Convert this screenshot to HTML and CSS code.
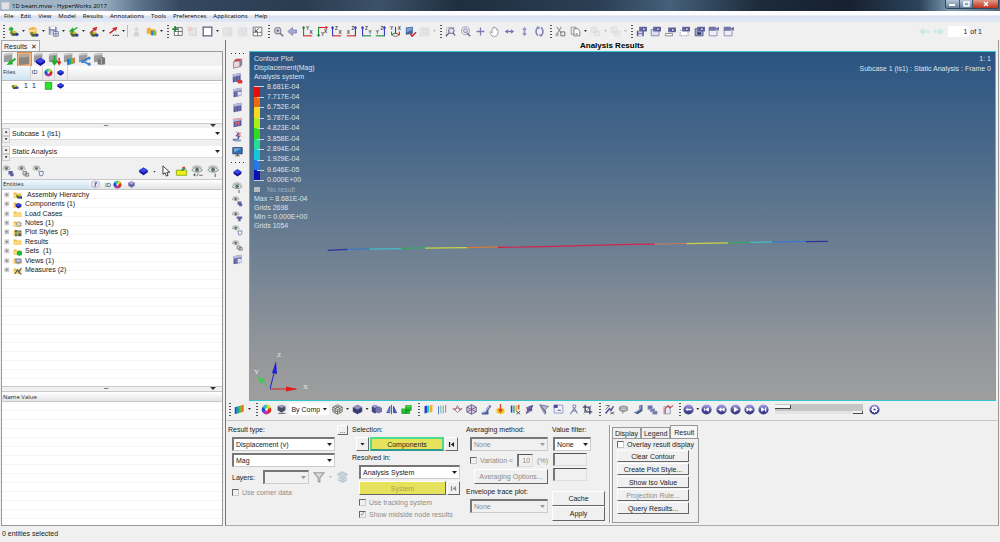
FILE: index.html
```html
<!DOCTYPE html>
<html lang="en">
<head>
<meta charset="utf-8">
<title>1D beam.mvw - HyperWorks 2017</title>
<link rel="stylesheet" href="styles.css">
</head>
<body>
<svg class="defs" aria-hidden="true">
  <defs>
    <linearGradient id="ball" x1="0" y1="0" x2="0" y2="1"><stop offset="0" stop-color="#a9a9ea"/><stop offset=".6" stop-color="#4a4a9c"/><stop offset="1" stop-color="#35357c"/></linearGradient>
    <linearGradient id="rain" x1="0" x2="1"><stop offset="0" stop-color="#1428c8"/><stop offset=".3" stop-color="#18b8d8"/><stop offset=".55" stop-color="#3cc83c"/><stop offset=".75" stop-color="#e8d820"/><stop offset="1" stop-color="#d82010"/></linearGradient>
    <symbol id="cubes" viewBox="0 0 14 14"><ellipse cx="5" cy="8.500" rx="2.600" ry="2.200" fill="#7d8a35"/><ellipse cx="8.500" cy="8" rx="2.500" ry="2" fill="#d8c022"/><ellipse cx="7" cy="10.800" rx="2.800" ry="2" fill="#55603a"/><ellipse cx="11" cy="10.600" rx="2.500" ry="2" fill="#2b3fa8"/></symbol>
    <symbol id="folder" viewBox="0 0 14 14"><path d="M1 4h4l1 1.500h7V12H1z" fill="#f0b93c"/><path d="M2 6.500h11V12H1z" fill="#fbdc7c"/></symbol>
    <symbol id="new" viewBox="0 0 14 14"><use href="#cubes"/><path d="M4 1v6M1 4h6M2 2l4 4M6 2L2 6" stroke="#2fae3a" stroke-width="1.400"/></symbol>
    <symbol id="open" viewBox="0 0 14 14"><path d="M1 3l6-2 4 2v5H1z" fill="#f3b54a"/><path d="M2 5l9-1-1 4H1z" fill="#ffd98a"/><use href="#cubes" y="1"/></symbol>
    <symbol id="save" viewBox="0 0 14 14"><path d="M1 1h10v10H1z" fill="#8286b0"/><path d="M3 1h6v3H3z" fill="#fff"/><path d="M3 6h6v5H3z" fill="#d4d6ea"/><path d="M7 7h6v6H7z" fill="#eef" stroke="#6a6f92"/><path d="M10 7v6M7 10h6" stroke="#6a6f92"/></symbol>
    <symbol id="imp" viewBox="0 0 14 14"><use href="#cubes" y="1"/><path d="M12 1L7 4 6 2 1 7l7 1-1-2 5-3z" fill="#22a52c"/></symbol>
    <symbol id="exp" viewBox="0 0 14 14"><use href="#cubes" y="1"/><path d="M2 8l5-4-2-1 7-2-2 6-1-2-5 4z" fill="#c92a36"/></symbol>
    <symbol id="expd" viewBox="0 0 14 14"><path d="M1 9l6-5-2-1 7-2-2 6-1-2-6 5z" fill="#c92a36"/><path d="M6 12h2m1 0h2m1 0h2" stroke="#444" stroke-width="1.500"/></symbol>
    <symbol id="user" viewBox="0 0 14 14"><circle cx="7" cy="4" r="2.500" fill="#d3ddd5"/><path d="M3 13l2-6h4l2 6z" fill="#ccd6cf"/></symbol>
    <symbol id="folders" viewBox="0 0 14 14"><path d="M1 3l5-1v8H1zM5 4h7v7H5z" fill="#f4ab38"/><path d="M7 6h6v6H7z" fill="url(#rain)"/></symbol>
    <symbol id="padd" viewBox="0 0 14 14"><path d="M3 2h10v10H3zM8 2v10M3 7h10" fill="#fff" stroke="#55585e"/><path d="M4 0v7M0.500 4h7" stroke="#1f8c32" stroke-width="2"/></symbol>
    <symbol id="pdel" viewBox="0 0 14 14"><path d="M3 3h9v9H3z" fill="#e8e4e6" stroke="#d9d2d6"/><path d="M1 1l5 5M6 1L1 6" stroke="#efc5c8" stroke-width="1.500"/></symbol>
    <symbol id="box" viewBox="0 0 14 14"><path d="M1.500 1.500h11v11h-11z" fill="#fff" stroke="#5b5f80" stroke-width="1.600"/></symbol>
    <symbol id="fade" viewBox="0 0 14 14"><path d="M1.500 2.500h11v10h-11zM6 4h5v6H6z" fill="#e4e5e8" stroke="#d9dbde"/></symbol>
    <symbol id="swap" viewBox="0 0 14 14"><path d="M1.500 1.500h11v11h-11zM7 8v4.500M1.500 8h11" fill="#fff" stroke="#555968"/><path d="M4 7l5-4M4 3v4h3" fill="none" stroke="#30343e"/></symbol>
    <symbol id="zin" viewBox="0 0 14 14"><circle cx="6" cy="6" r="4" fill="#d6d6dd" stroke="#84858e" stroke-width="1.400"/><path d="M4 6h4M6 4v4" stroke="#555a90"/><path d="M9 9l4 4" stroke="#777986" stroke-width="2"/></symbol>
    <symbol id="back" viewBox="0 0 14 14"><path d="M1 7l6-5v3h5v4H7v3z" fill="#a7a9dc" stroke="#7c7fae"/></symbol>
    <symbol id="v1" viewBox="0 0 14 14"><path d="M2 13V1M.5 3L2 1l1.500 2" stroke="#159038" fill="none" stroke-width="1.400"/><path d="M2 12.500h11" stroke="#cc2b2b" stroke-width="1.400"/><text x="5" y="5">Y</text><text x="9.500" y="10">X</text></symbol>
    <symbol id="v2" viewBox="0 0 14 14"><path d="M2 1v12M.5 11L2 13l1.500-2" stroke="#159038" fill="none" stroke-width="1.400"/><path d="M2 2h11M11 .5L13 2l-2 1.500" stroke="#cc2b2b" fill="none" stroke-width="1.400"/><text x="9" y="9">X</text><text x="5" y="13">Y</text></symbol>
    <symbol id="v3" viewBox="0 0 14 14"><path d="M2 13V1M.5 3L2 1l1.500 2" stroke="#3438c4" fill="none" stroke-width="1.400"/><path d="M2 12.500h11" stroke="#cc2b2b" stroke-width="1.400"/><text x="5" y="5">Z</text><text x="9.500" y="10">X</text></symbol>
    <symbol id="v4" viewBox="0 0 14 14"><path d="M12 13V1m-1.500 2L12 1l1.500 2" stroke="#3438c4" fill="none" stroke-width="1.400"/><path d="M1 12.500h11" stroke="#cc2b2b" stroke-width="1.400"/><text x="7" y="5">Z</text><text x="1" y="10">X</text></symbol>
    <symbol id="v5" viewBox="0 0 14 14"><path d="M2 13V1M.5 3L2 1l1.500 2" stroke="#3438c4" fill="none" stroke-width="1.400"/><path d="M2 12.500h11" stroke="#159038" stroke-width="1.400"/><text x="5" y="5">Z</text><text x="9.500" y="10">Y</text></symbol>
    <symbol id="v6" viewBox="0 0 14 14"><path d="M12 13V1m-1.500 2L12 1l1.500 2" stroke="#3438c4" fill="none" stroke-width="1.400"/><path d="M1 12.500h11" stroke="#159038" stroke-width="1.400"/><text x="7" y="5">Z</text><text x="1" y="10">Y</text></symbol>
    <symbol id="iso" viewBox="0 0 14 14"><path d="M7 9V1" stroke="#3438c4" stroke-width="1.400"/><path d="M7 9l-5 2V7" stroke="#159038" fill="none" stroke-width="1.300"/><path d="M7 9l5 2V7" stroke="#cc2b2b" fill="none" stroke-width="1.300"/><path d="M3 12l4 1.500 4-1.500" stroke="#555" fill="none"/><text x="0" y="5">Y</text><text x="10" y="5">X</text></symbol>
    <symbol id="rview" viewBox="0 0 14 14"><path d="M1 2l9-1v9l-9 1z" fill="#42679f"/><path d="M2 3l7-1v3l-7 3z" fill="#7ea0cf"/><path d="M7 10l2 3 5-5" fill="none" stroke="#d3242e" stroke-width="2"/></symbol>
    <symbol id="zrect" viewBox="0 0 14 14"><path d="M2 12V2h10" fill="none" stroke="#8d8fb0" stroke-dasharray="2 1"/><circle cx="8" cy="6" r="3.500" fill="#e0e1ea" stroke="#777a94" stroke-width="1.300"/><path d="M5 9l-4 4M10 9l3 3" stroke="#555978" stroke-width="1.500"/></symbol>
    <symbol id="zfit" viewBox="0 0 14 14"><circle cx="7" cy="6" r="5" fill="none" stroke="#a4a5c4" stroke-width="1.300"/><circle cx="7" cy="6" r="2.500" fill="#dedfea" stroke="#777a94"/><path d="M9 9l4 4" stroke="#6c6e90" stroke-width="1.800"/></symbol>
    <symbol id="cross" viewBox="0 0 14 14"><path d="M7 2v10M2 7h10" stroke="#777bb8" stroke-width="1.600"/></symbol>
    <symbol id="hand" viewBox="0 0 14 14"><path d="M4 13L1 8l1-1 2 2V3l1-1 1 1V1.500h1.500V3l1-1 1 1v2l1-1 1 1v4l-2 4z" fill="#fff" stroke="#777985" stroke-width=".8"/></symbol>
    <symbol id="lr" viewBox="0 0 14 14"><path d="M1 7l4-3v2h4V4l4 3-4 3V8H5v2z" fill="#7477ba"/></symbol>
    <symbol id="ud" viewBox="0 0 14 14"><path d="M7 1l3 4H8v4h2l-3 4-3-4h2V5H4z" fill="#9092c4"/></symbol>
    <symbol id="rot" viewBox="0 0 14 14"><path d="M5 1.500Q0 7 5 12.500M9 1.500q5 5.500 0 11" fill="none" stroke="#8083ba" stroke-width="2"/><path d="M3 1h4v3zM11 13H7v-3z" fill="#7376b5"/></symbol>
    <symbol id="cut" viewBox="0 0 14 14"><path d="M2 1l7 9M8 1L3 10" stroke="#8a8ca0" stroke-width="1.300"/><circle cx="2.500" cy="11" r="1.500" fill="none" stroke="#777"/><path d="M7.500 7.500h5v5h-5z" fill="#eee" stroke="#555"/></symbol>
    <symbol id="copy" viewBox="0 0 14 14"><path d="M1.500 1.500h6v9h-6z" fill="#eee" stroke="#888"/><path d="M5 3.500h5l2.500 2.500v6.500H5z" fill="#fff" stroke="#666"/><path d="M7 9h3v3H7z" fill="#aaa"/></symbol>
    <symbol id="paste" viewBox="0 0 14 14"><path d="M1.500 1.500h7v7h-7zM5.500 6.500h7v6h-7z" fill="#e8e8e8" stroke="#dadada"/></symbol>
    <symbol id="cam" viewBox="0 0 14 14"><path d="M4 1h10v6H4z" fill="#6467a4"/><circle cx="10" cy="4" r="2" fill="#c9cbe6" stroke="#353872"/></symbol>
    <symbol id="c1" viewBox="0 0 14 14"><path d="M1 6h9v7H1z" fill="#5b5f9c"/><path d="M3 6h5v3H3zM3 10h5v3H3z" fill="#d5d7ec"/><use href="#cam"/></symbol>
    <symbol id="c2" viewBox="0 0 14 14"><path d="M1.500 4.500h10v8h-10z" fill="#dddff0" stroke="#7376a3"/><use href="#cam"/></symbol>
    <symbol id="c3" viewBox="0 0 14 14"><path d="M.5 9.500h9v3h-9z" fill="#fff" stroke="#777"/><use href="#cam" y="1"/></symbol>
    <symbol id="c4" viewBox="0 0 14 14"><path d="M1.500 5.500h10v7h-10z" fill="#fff" stroke="#8b8eaa" stroke-dasharray="2 1"/><use href="#cam"/></symbol>
    <symbol id="c5" viewBox="0 0 14 14"><path d="M1.500 3.500h10v9h-10z" fill="#a5a8ca" stroke="#454979"/><path d="M4 8h5v3H4z" fill="#333a6c"/><use href="#cam"/></symbol>
    <symbol id="c6" viewBox="0 0 14 14"><path d="M1.500 3.500h10v9h-10z" fill="#eeeef6" stroke="#777aa3"/><path d="M1 1h9v5H1zM10 3l4-2v5l-4-2z" fill="#7275a5"/></symbol>
    <symbol id="nav" viewBox="0 0 14 14"><path d="M0 7l6-5v3h3v4H6v3zM10 5h3v4h-3z" fill="#c9ebe8"/></symbol>
    <symbol id="win" viewBox="0 0 14 14"><path d="M2 3l10-2v10L2 13z" fill="#565a98"/><path d="M2 3l10-2v3L2 6z" fill="#b9bcdf"/><path d="M5 5v7M9 4v7" stroke="#8a8dc2"/></symbol>
    <symbol id="w1" viewBox="0 0 14 14"><path d="M2 5l8-2v8l-8 2z" fill="#e6dde2" stroke="#966b78"/><path d="M2 4l3-3h8l-3 3z" fill="#c44c55"/><path d="M10 4l3-3v8l-3 3z" fill="#8b7c9c"/></symbol>
    <symbol id="w2" viewBox="0 0 14 14"><use href="#win" x="-1" y="-1"/><ellipse cx="10" cy="11" rx="3.500" ry="2.500" fill="#d9303a"/></symbol>
    <symbol id="w3" viewBox="0 0 14 14"><use href="#win"/><path d="M7 6h5v5H7z" fill="#dfe0ef"/></symbol>
    <symbol id="w4" viewBox="0 0 14 14"><use href="#win"/><path d="M1 2h12v2H1z" fill="#e3a9a9"/><path d="M4 6h5v4H4z" fill="#c95c6c"/></symbol>
    <symbol id="probe" viewBox="0 0 14 14"><path d="M1 11h6l2-4-3-1 3-4" fill="none" stroke="#54689c" stroke-width="2"/><path d="M5 1l7 6M12 2L6 7" stroke="#d15a5a"/><ellipse cx="7" cy="12" rx="5" ry="1.500" fill="#8da0c4"/></symbol>
    <symbol id="screen" viewBox="0 0 14 14"><path d="M1 2h12v8H1z" fill="#326fb8" stroke="#273c60"/><path d="M2 3h10l-9 5z" fill="#6aaee2"/><path d="M6 10h2v2H6zM4 12h6v1H4z" fill="#555"/></symbol>
    <symbol id="comp" viewBox="0 0 14 14"><path d="M2 6l5-3 5 3v2.500L7 12 2 8.500z" fill="#1414a0"/><path d="M2 6l5-3 5 3-5 3z" fill="#3a46e0"/></symbol>
    <symbol id="eye" viewBox="0 0 14 14"><path d="M0 6q6-7 13 0-6 5-13 0z" fill="#e4e7e6" stroke="#818a88"/><circle cx="6.500" cy="5.500" r="2.300" fill="#5a706c"/><path d="M1 3q5-4 11 0" fill="none" stroke="#999"/></symbol>
    <symbol id="eye1" viewBox="0 0 14 14"><use href="#eye"/><path d="M9 10v4" stroke="#444"/></symbol>
    <symbol id="eyepm" viewBox="0 0 14 14"><use href="#eye"/><path d="M2 11.500h3M3.500 10v3M6 13l2-3M9 12h4" stroke="#555"/></symbol>
    <symbol id="eyec" viewBox="0 0 14 14"><use href="#eye" width="10" height="10"/><path d="M7 7h5v4H7zM9 10h4v3H9z" fill="#5d609c"/></symbol>
    <symbol id="eyet" viewBox="0 0 14 14"><use href="#eye" width="10" height="10"/><path d="M6 7h7v3h-2v3H8v-3H6z" fill="#5d609c"/></symbol>
    <symbol id="eyeo" viewBox="0 0 14 14"><use href="#eye" width="10" height="10"/><path d="M7.500 7.500h5v3l-1 2h-3z" fill="#f2f2fa" stroke="#6d70a3"/></symbol>
    <symbol id="eyer" viewBox="0 0 14 14"><use href="#eye" width="10" height="10"/><path d="M6.500 7.500h4v4h-4zM9 9.500h4v3.500H9z" fill="#ddd" stroke="#777"/></symbol>
    <symbol id="contour" viewBox="0 0 14 14"><path d="M1 4l11-3v9L1 13z" fill="url(#rain)"/><path d="M5 3v9M9 2v9" stroke="#2a4c50" stroke-width=".6"/></symbol>
    <symbol id="wheel" viewBox="0 0 14 14"><circle cx="7" cy="7" r="6" fill="#3ab83c"/><path d="M7 7V1a6 6 0 0 1 5.500 4z" fill="#f0d322"/><path d="M7 7l5.500-2a6 6 0 0 1-3 7.500z" fill="#e22a2a"/><path d="M7 7l2.500 5.500A6 6 0 0 1 2 10.500z" fill="#c02cc0"/><path d="M7 7l-5 3.500A6 6 0 0 1 2 4z" fill="#2242d8"/><path d="M7 7L2 4a6 6 0 0 1 5-3z" fill="#25c5cb"/><circle cx="7" cy="7" r="1.600" fill="#fff"/></symbol>
    <symbol id="gcube" viewBox="0 0 14 14"><path d="M2 3l5-2 5 2v5l-5 3-5-3z" fill="#4b4f66"/><path d="M2 3l5-2 5 2-5 2z" fill="#9da0b8"/><path d="M3 12h9" stroke="#777" stroke-width="1.500"/></symbol>
    <symbol id="mesh" viewBox="0 0 14 14"><path d="M1 4l6-3 6 3v6l-6 3-6-3zM1 4l6 3 6-3M7 7v6M4 2.500l6 3v6M10 2.500l-6 3v6M1 7l6 3 6-3" fill="#e5e5e0" stroke="#55554e" stroke-width=".9"/></symbol>
    <symbol id="solid" viewBox="0 0 14 14"><path d="M1 4l6-3 6 3v6l-6 3-6-3z" fill="#484b86"/><path d="M1 4l6-3 6 3-6 3z" fill="#9194bf"/><path d="M7 7v6M4 5.500v6M10 5.500v6M1 7l6 3 6-3" stroke="#252850" stroke-width=".7" fill="none"/></symbol>
    <symbol id="blocks" viewBox="0 0 14 14"><path d="M1 3l4-2 4 2v7l-4 2-4-2z" fill="#454981"/><path d="M6 5l4-2 4 2v5l-4 2-4-2z" fill="#7276ac"/><path d="M1 3l4-2 4 2-4 2z" fill="#9da0c8"/></symbol>
    <symbol id="mirror" viewBox="0 0 14 14"><path d="M1 11l4-8v8z" fill="#7f9bea" stroke="#2b3d9c"/><path d="M7 1v12" stroke="#444"/><path d="M9.500 3v8h4z" fill="#4b62cc" stroke="#2b3d9c"/></symbol>
    <symbol id="gblocks" viewBox="0 0 14 14"><path d="M1 6h6v6H1zM6 2h7v6H6zM6 8h5v4H6z" fill="#22c52c" stroke="#168020" stroke-width=".8"/><path d="M1 6h5M7 3h5" stroke="#7cf078"/></symbol>
    <symbol id="bands" viewBox="0 0 14 14"><path d="M2 3l3-1v9l-3 1z" fill="#1c32c4"/><path d="M5 2.500l3-1v9l-3 1z" fill="#28c4d8"/><path d="M9 2l3-1v9l-3 1z" fill="#e8b424"/></symbol>
    <symbol id="lines" viewBox="0 0 14 14"><path d="M2 3v10" stroke="#2b51c8"/><path d="M5 2v10" stroke="#25a7a7"/><path d="M8 2v10" stroke="#51a83a"/><path d="M11 1v10" stroke="#c94a33"/></symbol>
    <symbol id="vec" viewBox="0 0 14 14"><path d="M1 5l6 6 6-6M4 8l3-6 3 6M1 7l6-2 6 2" fill="none" stroke="#a35c7a"/></symbol>
    <symbol id="tens" viewBox="0 0 14 14"><path d="M1 4l6-3 6 3v6l-6 3-6-3z" fill="#d0cfe8" stroke="#55467e"/><path d="M7 1v12M1 4l12 6M13 4L1 10" stroke="#80436c"/></symbol>
    <symbol id="bend" viewBox="0 0 14 14"><path d="M1 12h7V7l4-5" fill="none" stroke="#525994" stroke-width="3"/><path d="M1 11l5-2 5-7" fill="none" stroke="#b2c6ec" stroke-width="1.500"/></symbol>
    <symbol id="down" viewBox="0 0 14 14"><path d="M2 6l5-2 5 3v4l-5 2-5-2z" fill="#f5c518"/><path d="M7 0v9M4.500 6.500L7 10l2.500-3.500" fill="none" stroke="#d1481e" stroke-width="1.600"/></symbol>
    <symbol id="fx" viewBox="0 0 14 14"><path d="M1 2h2v9H1z" fill="#2d49ba"/><path d="M4 2h2v9H4z" fill="#45ad8a"/><path d="M7 2h2v7H7z" fill="#ddba34"/><path d="M10 1h2v6h-2z" fill="#b85a40"/><path d="M8 9l5 4m0-4l-5 4" stroke="#333"/></symbol>
    <symbol id="sweep" viewBox="0 0 14 14"><path d="M3 4l9-3-2 5 1 2-9 5 2-5z" fill="#474c9c"/><path d="M2 5h7M2 9h8" stroke="#c99"/></symbol>
    <symbol id="funnel" viewBox="0 0 14 14"><path d="M1 1l11 2-4 4v6L5 9z" fill="#b7bada" stroke="#62668e"/><path d="M3 3l6 8" stroke="#444"/></symbol>
    <symbol id="note" viewBox="0 0 14 14"><path d="M1.500 1.500h11v10h-11z" fill="#f2f2ff" stroke="#8589bb"/><path d="M1 1h5v4H1z" fill="#4549a0"/><path d="M6 8h4" stroke="#334"/></symbol>
    <symbol id="trace" viewBox="0 0 14 14"><circle cx="8" cy="3" r="2" fill="none" stroke="#5d6297"/><path d="M8 5L3 13M8 5l4 7M5 9h6" fill="none" stroke="#7679a5" stroke-width="1.300"/></symbol>
    <symbol id="crop" viewBox="0 0 14 14"><path d="M4 1v9h9M1 4h9v9" fill="none" stroke="#3f4270" stroke-width="1.700"/><path d="M2 12L12 2" stroke="#777"/></symbol>
    <symbol id="meas" viewBox="0 0 14 14"><path d="M2 12L7 6l2 2 3-5" fill="none" stroke="#50558e" stroke-width="2"/><path d="M2 2h5L2 7M8 10l5 3m0-3l-5 3" fill="none" stroke="#555"/></symbol>
    <symbol id="talk" viewBox="0 0 14 14"><ellipse cx="7" cy="6" rx="6" ry="4" fill="#9b9b9b"/><path d="M5 9v4l4-4z" fill="#9b9b9b"/><path d="M4 5h6M4 7h6" stroke="#ddd"/></symbol>
    <symbol id="plane" viewBox="0 0 14 14"><path d="M1 11L8 7V2l4-1v8l-6 4z" fill="#4c5c94"/><path d="M2 11l7-4 1-5" stroke="#b0c0e4" fill="none"/></symbol>
    <symbol id="stack" viewBox="0 0 14 14"><path d="M1 2h6v5H1zM4 6h6v4H4zM7 9h6v4H7z" fill="#6c70a4" stroke="#a9abcf" stroke-width=".6"/></symbol>
    <symbol id="curve" viewBox="0 0 14 14"><path d="M2.500 3.500h8v9h-8z" fill="#e9e9f3" stroke="#8588ad"/><path d="M4 12V6l4-4 2 3 4-3" fill="none" stroke="#c73b42" stroke-width="1.400"/></symbol>
    <symbol id="orb" viewBox="0 0 14 14"><circle cx="7" cy="7" r="6.500" fill="url(#ball)"/></symbol>
    <symbol id="p0" viewBox="0 0 14 14"><use href="#orb"/><path d="M3 7l3-2v1h5v2H6v1z" fill="#fff"/></symbol>
    <symbol id="p1" viewBox="0 0 14 14"><use href="#orb"/><path d="M4 5h1v4H4zM5 7l5-3v6z" fill="#fff"/></symbol>
    <symbol id="p2" viewBox="0 0 14 14"><use href="#orb"/><path d="M2.500 7L7 4v6zM6.500 7L11 4v6z" fill="#fff"/></symbol>
    <symbol id="p3" viewBox="0 0 14 14"><use href="#orb"/><path d="M5 3.500L11 7l-6 3.500z" fill="#fff"/></symbol>
    <symbol id="p4" viewBox="0 0 14 14"><use href="#orb"/><path d="M11.500 7L7 4v6zM7.500 7L3 4v6z" fill="#fff"/></symbol>
    <symbol id="p5" viewBox="0 0 14 14"><use href="#orb"/><path d="M9 4.500h1.500v5H9zM9 7L4 4v6z" fill="#fff"/></symbol>
    <symbol id="p6" viewBox="0 0 14 14"><use href="#orb"/><circle cx="7" cy="7" r="2.600" fill="none" stroke="#fff" stroke-width="1.600"/><path d="M7 2.500v9M2.500 7h9M4 4l6 6M10 4l-6 6" stroke="#fff" stroke-width="1.200"/><circle cx="7" cy="7" r="1.400" fill="#4a4a9c"/></symbol>
    <symbol id="gsq" viewBox="0 0 14 14"><path d="M1 1l9-1v9l-9 1z" fill="#9b9b9b"/><path d="M1 1l9-1v2l-9 1z" fill="#c8c8c8"/></symbol>
    <symbol id="b1" viewBox="0 0 14 14"><use href="#gsq"/><path d="M13 5L8 9V7l-4 6 7-1-1-2 4-3z" fill="#20b030"/></symbol>
    <symbol id="b2" viewBox="0 0 14 14"><path d="M1 2l11-1v11L1 13z" fill="#8b8582"/><path d="M1 2l11-1v3L1 5z" fill="#b3aaa5"/></symbol>
    <symbol id="b3" viewBox="0 0 14 14"><use href="#gsq"/><use href="#comp" x="1" y="2" width="14" height="14"/></symbol>
    <symbol id="b4" viewBox="0 0 14 14"><use href="#gsq"/><path d="M7 3v8M4 8l3 4 3-4" fill="none" stroke="#1cae2c" stroke-width="2"/><path d="M12 5v6M10 9l2 3 2-3" fill="none" stroke="#cf2f2f" stroke-width="1.500"/></symbol>
    <symbol id="b5" viewBox="0 0 14 14"><use href="#gsq"/><use href="#contour" x="4" y="4" width="10" height="10"/></symbol>
    <symbol id="b6" viewBox="0 0 14 14"><use href="#gsq"/><path d="M5 9l7-4M5 9l7 3" stroke="#2e6fbd" stroke-width="1.400"/><circle cx="5" cy="9" r="2" fill="#3c86d6"/><circle cx="12" cy="5.500" r="1.700" fill="#3c86d6"/><circle cx="12" cy="12" r="1.700" fill="#3c86d6"/></symbol>
    <symbol id="b7" viewBox="0 0 14 14"><use href="#gsq"/><path d="M5 5l4-1 4 1v7l-4 1-4-1z" fill="#777"/><path d="M5 5l4 1v7" stroke="#bbb" fill="none"/></symbol>
    <symbol id="green" viewBox="0 0 14 14"><path d="M2 2h10v11H2z" fill="#2ae52a" stroke="#157a15"/></symbol>
    <symbol id="arrow" viewBox="0 0 14 14"><path d="M4 1v10l2.500-2L8 13l2-1-1.500-3.500H12z" fill="#fff" stroke="#222"/></symbol>
    <symbol id="hl" viewBox="0 0 14 14"><path d="M1 6h12v6H1z" fill="#f2ee14" stroke="#86a81e"/><path d="M6 6l4-4 2 2-3 3z" fill="#2a9c68"/><path d="M8 2h3v2H8z" fill="#d23a3a"/></symbol>
    <symbol id="info" viewBox="0 0 14 14"><path d="M1 3l6-2 6 2v7l-6 3-6-3z" fill="#e3e5f2" stroke="#a9acc6"/><path d="M8 3L6 11M9 5H6" stroke="#5056a8" stroke-width="1.500"/></symbol>
    <symbol id="pcube" viewBox="0 0 14 14"><path d="M2 4l5-2 5 2v5l-5 3-5-3z" fill="#6668a8"/><path d="M2 4l5-2 5 2-5 3z" fill="#a9abd8"/></symbol>
    <symbol id="plus" viewBox="0 0 14 14"><path d="M2 2h9v9H2z" fill="#f4f4f4" stroke="#999"/><path d="M3 6.500h7M6.500 3v7" stroke="#444" stroke-width="1.400"/></symbol>
    <symbol id="fcomp" viewBox="0 0 14 14"><use href="#folder"/><use href="#comp" x="2" y="2" width="13" height="13"/></symbol>
    <symbol id="fasm" viewBox="0 0 14 14"><use href="#folder"/><use href="#cubes" x="2" y="1"/></symbol>
    <symbol id="fnote" viewBox="0 0 14 14"><use href="#folder"/><circle cx="9" cy="8" r="3.500" fill="#dadada" stroke="#777"/></symbol>
    <symbol id="fplot" viewBox="0 0 14 14"><use href="#folder"/><path d="M3 3h4v4H3zM8 4h5v3H8zM3 8h4v5H3zM8 8h5v5H8z" fill="#62634a"/><path d="M9 5h2v2H9zM4 9h2v2H4z" fill="#78d048"/></symbol>
    <symbol id="fset" viewBox="0 0 14 14"><use href="#folder"/><path d="M6 7l4-1 4 1v5l-4 2-4-2z" fill="#1fb83a"/></symbol>
    <symbol id="fview" viewBox="0 0 14 14"><use href="#folder"/><path d="M4.500 4.500h8v6h-8zM8 10v3" fill="#b8bcd8" stroke="#55597c"/></symbol>
    <symbol id="fmeas" viewBox="0 0 14 14"><use href="#folder"/><path d="M3 12l4-6 2 3 4-6M8 9l5 4" fill="none" stroke="#484b50" stroke-width="1.600"/></symbol>
    <symbol id="gfun" viewBox="0 0 14 14"><path d="M1 2h12L8 8v5l-2-1V8z" fill="#d9d9d9" stroke="#9a9a9a" stroke-width="1.300"/></symbol>
    <symbol id="glay" viewBox="0 0 14 14"><path d="M2 4l5-3 6 3-5 3zM2 7l6 3 5-3M2 10l6 3 5-3" fill="#cbd6dc" stroke="#b8c8d0" stroke-width="1.500"/></symbol>
    <symbol id="first" viewBox="0 0 14 14"><path d="M3 3h2v8H3zM11 3v8L6 7z" fill="currentColor"/></symbol>
  </defs>
</svg>

<header class="titlebar">
  <svg class="ic"><use href="#fade"/></svg><h1>1D beam.mvw - HyperWorks 2017</h1>
  <div class="winbtns"><button aria-label="Minimize"><svg viewBox="0 0 10 8"><path d="M2 5h6" stroke="#fff" stroke-width="2"/></svg></button><button aria-label="Restore"><svg viewBox="0 0 10 8"><path d="M3 2h5v4H3z" fill="none" stroke="#fff" stroke-width="1.500"/></svg></button><button class="close" aria-label="Close"><svg viewBox="0 0 10 8"><path d="M3 2l4 4M7 2L3 6" stroke="#fff" stroke-width="1.600"/></svg></button></div>
</header>
<nav class="menu"><a href="#">File</a><a href="#">Edit</a><a href="#">View</a><a href="#">Model</a><a href="#">Results</a><a href="#">Annotations</a><a href="#">Tools</a><a href="#">Preferences</a><a href="#">Applications</a><a href="#">Help</a></nav>

<div class="toolbar">
  <div class="group g1"><i class="grip"></i><button><svg><use href="#new"/></svg></button><i class="dd"></i><button><svg><use href="#open"/></svg></button><i class="dd"></i><button><svg><use href="#save"/></svg></button><i class="dd"></i><button><svg><use href="#imp"/></svg></button><i class="dd"></i><button><svg><use href="#exp"/></svg></button><i class="dd"></i><button><svg><use href="#expd"/></svg></button><i class="dd"></i><i class="sep"></i><button><svg><use href="#user"/></svg></button><button><svg><use href="#folders"/></svg></button><i class="dd"></i></div>
  <div class="group g2"><i class="grip"></i><button><svg><use href="#padd"/></svg></button><button><svg><use href="#pdel"/></svg></button><button><svg><use href="#box"/></svg></button><i class="dd"></i><button><svg><use href="#fade"/></svg></button><button><svg><use href="#fade"/></svg></button><button><svg><use href="#swap"/></svg></button></div>
  <div class="group g3"><i class="grip"></i><button><svg><use href="#zin"/></svg></button><button><svg><use href="#back"/></svg></button><button><svg><use href="#v1"/></svg></button><button><svg><use href="#v2"/></svg></button><button><svg><use href="#v3"/></svg></button><button><svg><use href="#v4"/></svg></button><button><svg><use href="#v5"/></svg></button><button><svg><use href="#v6"/></svg></button><button><svg><use href="#iso"/></svg></button><button><svg><use href="#rview"/></svg></button><button><svg><use href="#fade"/></svg></button><i class="dd off"></i></div>
  <div class="group g4"><i class="grip"></i><button><svg><use href="#zrect"/></svg></button><button><svg><use href="#zfit"/></svg></button><button><svg><use href="#cross"/></svg></button><button><svg><use href="#hand"/></svg></button><button><svg><use href="#lr"/></svg></button><button><svg><use href="#ud"/></svg></button><button><svg><use href="#rot"/></svg></button></div>
  <div class="group g5"><i class="grip"></i><button><svg><use href="#cut"/></svg></button><button><svg><use href="#copy"/></svg></button><i class="dd"></i><button><svg><use href="#paste"/></svg></button><i class="dd off"></i><button><svg><use href="#paste"/></svg></button><i class="dd off"></i></div>
  <div class="group g6"><i class="grip"></i><button><svg><use href="#c1"/></svg></button><button><svg><use href="#c2"/></svg></button><button><svg><use href="#c3"/></svg></button><button><svg><use href="#c4"/></svg></button><button><svg><use href="#c5"/></svg></button><button><svg><use href="#c6"/></svg></button><button><svg><use href="#c6"/></svg></button></div>
  <div class="pager"><button><svg><use href="#nav"/></svg></button><button class="flip"><svg><use href="#nav"/></svg></button><input value="1" aria-label="Page"><span>of 1</span></div>
</div>

<main>
  <aside>
    <div class="tab">Results <button aria-label="Close tab">✕</button></div>
    <div class="browser">
      <div class="views"><button><svg><use href="#b1"/></svg></button><button class="on"><svg><use href="#b2"/></svg></button><button><svg><use href="#b3"/></svg></button><button><svg><use href="#b4"/></svg></button><button><svg><use href="#b5"/></svg></button><button><svg><use href="#b6"/></svg></button><button><svg><use href="#b7"/></svg></button></div>
      <div class="files">
        <table>
          <thead><tr><th class="cf">Files</th><th>ID</th><th><svg class="ic"><use href="#wheel"/></svg></th><th><svg class="ic"><use href="#comp"/></svg></th><th class="rest"></th></tr></thead>
          <tbody><tr><td class="fi"><svg class="ic"><use href="#cubes"/></svg><span>1</span></td><td>1</td><td><svg class="ic"><use href="#green"/></svg></td><td><svg class="ic"><use href="#comp"/></svg></td><td></td></tr></tbody>
        </table>
      </div>
      <div class="split"><span>•••</span></div>
      <div class="step"><span class="spin"><button aria-label="Previous subcase"></button><button aria-label="Next subcase"></button></span><span class="sel"><select aria-label="Subcase"><option>Subcase 1 (ls1)</option></select></span></div>
      <div class="step"><span class="spin"><button aria-label="Previous step"></button><button aria-label="Next step"></button></span><span class="sel"><select aria-label="Simulation"><option>Static Analysis</option></select></span></div>
      <div class="eyes"><button><svg><use href="#eyec"/></svg></button><button><svg><use href="#eyer"/></svg></button><button><svg><use href="#eyeo"/></svg></button><div class="modes"><button><svg><use href="#comp"/></svg></button><i class="dd"></i><button><svg><use href="#arrow"/></svg></button><button><svg><use href="#hl"/></svg></button><button><svg><use href="#eyepm"/></svg></button><button><svg><use href="#eye1"/></svg></button></div></div>
      <div class="ehead"><span class="ent">Entities</span><svg class="ic"><use href="#info"/></svg><span class="id">ID</span><svg class="ic"><use href="#wheel"/></svg><svg class="ic"><use href="#pcube"/></svg></div>
      <div class="treebox">
        <ul class="tree">
          <li><svg class="ex"><use href="#plus"/></svg><svg class="ic"><use href="#fasm"/></svg><span class="in">Assembly Hierarchy</span></li>
          <li><svg class="ex"><use href="#plus"/></svg><svg class="ic"><use href="#fcomp"/></svg><span>Components (1)</span></li>
          <li><svg class="ex"><use href="#plus"/></svg><svg class="ic"><use href="#folder"/></svg><span>Load Cases</span></li>
          <li><svg class="ex"><use href="#plus"/></svg><svg class="ic"><use href="#fnote"/></svg><span>Notes (1)</span></li>
          <li><svg class="ex"><use href="#plus"/></svg><svg class="ic"><use href="#fplot"/></svg><span>Plot Styles (3)</span></li>
          <li><svg class="ex"><use href="#plus"/></svg><svg class="ic"><use href="#folder"/></svg><span>Results</span></li>
          <li><svg class="ex"><use href="#plus"/></svg><svg class="ic"><use href="#fset"/></svg><span>Sets&nbsp; (1)</span></li>
          <li><svg class="ex"><use href="#plus"/></svg><svg class="ic"><use href="#fview"/></svg><span>Views (1)</span></li>
          <li><svg class="ex"><use href="#plus"/></svg><svg class="ic"><use href="#fmeas"/></svg><span>Measures (2)</span></li>
        </ul>
      </div>
      <div class="split"><span>•••</span></div>
      <div class="nhead">Name Value</div>
      <div class="props"></div>
    </div>
  </aside>

  <section class="work">
    <h2>Analysis Results</h2>
    <div class="stage">
      <div class="side"><i class="hgrip"></i><div class="s1"><button><svg><use href="#w1"/></svg></button><button><svg><use href="#w2"/></svg></button><button><svg><use href="#w3"/></svg></button><button><svg><use href="#win"/></svg></button><button><svg><use href="#w4"/></svg></button><button><svg><use href="#probe"/></svg></button><button><svg><use href="#screen"/></svg></button></div><i class="hgrip"></i><div class="s2"><button><svg><use href="#comp"/></svg></button><button><svg><use href="#eye1"/></svg></button><button><svg><use href="#eyec"/></svg></button><button><svg><use href="#eyet"/></svg></button><button><svg><use href="#eyeo"/></svg></button><button><svg><use href="#eyer"/></svg></button><button><svg><use href="#w3"/></svg></button></div></div>
      <div class="view">
        <div class="legend">
          <p>Contour Plot<br>Displacement(Mag)<br>Analysis system</p>
          <div class="scale">
            <svg viewBox="0 0 12 104"><path d="M0 5h6v11H0z" fill="#e80c0c"/><path d="M0 16h6v10H0z" fill="#ee6a10"/><path d="M0 26h6v11H0z" fill="#f8dc20"/><path d="M0 37h6v10H0z" fill="#a8ee18"/><path d="M0 47h6v11H0z" fill="#30dc20"/><path d="M0 58h6v10H0z" fill="#28dc94"/><path d="M0 68h6v11H0z" fill="#18c4dc"/><path d="M0 79h6v10H0z" fill="#2478ee"/><path d="M0 89h6v10H0z" fill="#0c10b0"/><path d="M0 5.500h10M3 16.500h7M3 26.500h7M3 37.500h7M3 47.500h7M3 58.500h7M3 68.500h7M3 79.500h7M3 89.500h7M0 99.500h10" stroke="#c9d4e0"/></svg>
            <ol><li>8.681E-04</li><li>7.717E-04</li><li>6.752E-04</li><li>5.787E-04</li><li>4.823E-04</li><li>3.858E-04</li><li>2.894E-04</li><li>1.929E-04</li><li>9.646E-05</li><li>0.000E+00</li></ol>
          </div>
          <p class="none"><i></i>No result</p>
          <p>Max = 8.681E-04<br>Grids 2698<br>Min = 0.000E+00<br>Grids 1054</p>
        </div>
        <p class="frame">1: 1<br>Subcase 1 (ls1) : Static Analysis : Frame 0</p>
        <svg class="plot" viewBox="0 0 747 350" preserveAspectRatio="xMidYMin meet">
          <g fill="none" stroke-width="1.200">
            <path d="M77 199.500l20-1" stroke="#2634a0"/><path d="M97 198.500l22-.4" stroke="#3c78c8"/><path d="M119 198.200l32-.4" stroke="#44bcc8"/><path d="M151 197.800l24-1" stroke="#36a860"/><path d="M175 197.200l42-.5" stroke="#ccd444"/><path d="M217 196.700l31-.7" stroke="#d47c40"/><path d="M248 196.500l35-.5 100-2.500 23-.3" stroke="#d4244c"/><path d="M406 193.200l32-.6" stroke="#c07c60"/><path d="M438 192.700l42-.7" stroke="#ccd444"/><path d="M480 192l22-.5" stroke="#36a860"/><path d="M502 191.500l22-.5" stroke="#44bcc8"/><path d="M524 191l34-.5" stroke="#3c78c8"/><path d="M558 190.700l22-.2" stroke="#2634a0"/>
          </g>
        </svg>
        <svg class="triad" viewBox="0 0 70 50"><path d="M20 39h26" stroke="#e02020"/><path d="M36 36.500l12 2.500-12 2.500z" fill="#e02020"/><path d="M20 39l5-20" stroke="#2020d8"/><path d="M22 23l4-12 1 13z" fill="#2020d8"/><path d="M20 39L9 28" stroke="#40c850"/><path d="M7 26l8 4-4 4z" fill="#40c850"/><text x="27" y="7">Z</text><text x="4" y="24">Y</text><text x="53" y="39">X</text></svg>
      </div>
    </div>
    <div class="toolbar bottom">
      <div class="group h1"><i class="grip"></i><button><svg><use href="#contour"/></svg></button><i class="dd"></i></div>
      <div class="group h2"><i class="grip"></i><button><svg><use href="#wheel"/></svg></button><button><svg><use href="#gcube"/></svg></button><span class="sel bare"><select aria-label="Color by"><option>By Comp</option></select></span><button><svg><use href="#mesh"/></svg></button><i class="dd"></i><button><svg><use href="#solid"/></svg></button><i class="dd"></i><button><svg><use href="#blocks"/></svg></button><button><svg><use href="#mirror"/></svg></button><button><svg><use href="#gblocks"/></svg></button></div>
      <div class="group h3"><i class="grip"></i><button><svg><use href="#bands"/></svg></button><button><svg><use href="#lines"/></svg></button><button><svg><use href="#vec"/></svg></button><button><svg><use href="#tens"/></svg></button><button><svg><use href="#bend"/></svg></button><button><svg><use href="#down"/></svg></button><button><svg><use href="#fx"/></svg></button><button><svg><use href="#sweep"/></svg></button><button><svg><use href="#funnel"/></svg></button><button><svg><use href="#note"/></svg></button><button><svg><use href="#trace"/></svg></button><button><svg><use href="#crop"/></svg></button></div>
      <div class="group h4"><i class="grip"></i><button><svg><use href="#meas"/></svg></button><button><svg><use href="#talk"/></svg></button><button><svg><use href="#plane"/></svg></button><button><svg><use href="#stack"/></svg></button><button><svg><use href="#curve"/></svg></button></div>
      <div class="group h5"><i class="grip"></i><button><svg><use href="#p0"/></svg></button><i class="dd"></i><button><svg><use href="#p1"/></svg></button><button><svg><use href="#p2"/></svg></button><button><svg><use href="#p3"/></svg></button><button><svg><use href="#p4"/></svg></button><button><svg><use href="#p5"/></svg></button></div>
      <div class="sliders"><input type="range" min="0" max="100" value="0" aria-label="Current frame"><input class="low" type="range" min="0" max="100" value="100" aria-label="Last frame"></div>
      <button><svg><use href="#p6"/></svg></button>
    </div>
    <form class="panel">
      <div class="col k1">
        <div class="lab"><label for="rt">Result type:</label><button type="button" class="btn more">...</button></div>
        <span class="sel box ind"><select id="rt"><option>Displacement (v)</option></select></span>
        <span class="sel box ind"><select aria-label="Component"><option>Mag</option></select></span>
        <div class="layers"><label for="ly">Layers:</label><span class="sel box off"><select id="ly" disabled><option></option></select></span><svg class="ic"><use href="#gfun"/></svg><i class="dd off"></i><svg class="ic"><use href="#glay"/></svg></div>
        <label class="chk ind off"><input type="checkbox" disabled>Use corner data</label>
      </div>
      <div class="col k2">
        <div class="lab">Selection:</div>
        <div class="pick"><button type="button" class="btn drop" aria-label="Entity type"></button><button type="button" class="btn yellow lit">Components</button><button type="button" class="btn sq" aria-label="Reset"><svg><use href="#first"/></svg></button></div>
        <label class="lab" for="ri">Resolved in:</label>
        <span class="sel box ind"><select id="ri"><option>Analysis System</option></select></span>
        <div class="pick ind"><button type="button" class="btn yellow" disabled>System</button><button type="button" class="btn sq" disabled aria-label="Reset system"><svg><use href="#first"/></svg></button></div>
        <label class="chk ind off"><input type="checkbox" disabled>Use tracking system</label>
        <label class="chk ind off"><input type="checkbox" checked disabled>Show midside node results</label>
      </div>
      <div class="col k3">
        <label class="lab" for="am">Averaging method:</label>
        <span class="sel box ind off"><select id="am" disabled><option>None</option></select></span>
        <div class="var off"><label class="chk"><input type="checkbox" disabled>Variation &lt;</label><input class="field" value="10" disabled aria-label="Variation"><span>(%)</span></div>
        <button type="button" class="btn avg" disabled>Averaging Options...</button>
        <label class="lab" for="et">Envelope trace plot:</label>
        <span class="sel box ind off"><select id="et" disabled><option>None</option></select></span>
      </div>
      <div class="col k4">
        <label class="lab" for="vf">Value filter:</label>
        <span class="sel box short"><select id="vf"><option>None</option></select></span>
        <input class="field" disabled aria-label="Filter minimum"><input class="field" disabled aria-label="Filter maximum">
        <div class="acts"><button type="button" class="btn">Cache</button><button type="button" class="btn">Apply</button></div>
      </div>
      <div class="k5">
        <div class="tabs"><button type="button">Display</button><button type="button">Legend</button><button type="button" class="cur">Result</button></div>
        <div class="page">
          <label class="chk"><input type="checkbox">Overlay result display</label>
          <button type="button" class="btn">Clear Contour</button><button type="button" class="btn">Create Plot Style...</button><button type="button" class="btn">Show Iso Value</button><button type="button" class="btn" disabled>Projection Rule...</button><button type="button" class="btn">Query Results...</button>
        </div>
      </div>
    </form>
  </section>
</main>
<footer>0 entities selected</footer>
</body>
</html>
```

FILE: styles.css
```css
* { box-sizing: border-box; }
body { margin: 0; height: 100vh; display: flex; flex-direction: column; background: #f0f0f0; color: #222; font: 7px/9px "Liberation Sans", Arial, sans-serif; overflow: hidden; }
button, input, select { font: inherit; color: inherit; margin: 0; padding: 0; border: 0; background: none; min-width: 0; }
h1, h2, p, ul, ol { margin: 0; padding: 0; font: inherit; list-style: none; }
a { color: inherit; text-decoration: none; }
svg { display: block; flex: none; }
.defs { position: absolute; width: 0; height: 0; }
symbol text { font: bold 6px "Liberation Sans", sans-serif; fill: #444; }
.ic { width: 9px; height: 9px; }

.titlebar { height: 11px; flex: none; display: flex; align-items: center; gap: 2px; padding-left: 1px; color: #000; font: 6px/10px "Open Sans", sans-serif; background: linear-gradient(90deg, #a3b6c6 0, #9cb1c3 10%, #5b728a 14%, #34485e 18%, #2a3c50 30%, #3c5268 38%, #1f2e40 46%, #2c4055 60%, #45607a 67%, #1c2a3a 76%, #16212f 85%, #2c445c 92%, #7d9cb4 95%, #51677c 100%); }
.titlebar h1 { flex: 1; }
.winbtns { display: flex; align-self: flex-start; width: 54px; height: 9px; margin-right: 1px; border: 1px solid #33475a; border-top: 0; border-radius: 0 0 3px 3px; overflow: hidden; }
.winbtns button { flex: 1; background: linear-gradient(#b4c6d6, #66809a); border-right: 1px solid #40566b; }
.winbtns svg { width: 10px; height: 8px; margin: auto; }
.winbtns .close { flex: 2; background: linear-gradient(#e09a8a, #c03018); border: 0; }

.menu { height: 11px; flex: none; display: flex; align-items: center; gap: 7px; padding-left: 4px; color: #000; font: 6px/9px "Open Sans", sans-serif; background: linear-gradient(#fdfdff 0, #fdfdff 35%, #d9e1f1 45%, #e2e8f5 100%); }

.toolbar { height: 18px; flex: none; display: flex; align-items: center; gap: 4px; padding: 0 4px 0 3px; }
.group { display: flex; align-items: center; justify-content: space-between; flex: none; }
.g1 { width: 160px; } .g2 { width: 97px; } .g3 { width: 168px; } .g4 { width: 106px; } .g5 { width: 77px; } .g6 { width: 104px; }
.toolbar button, .views button, .eyes button, .side button { width: 13px; height: 13px; flex: none; }
.toolbar svg, .views svg, .eyes svg, .side svg { width: 13px; height: 13px; }
.toolbar svg, .side svg { padding: 1px 0; }
.flip { transform: scaleX(-1); }
.grip { width: 2px; height: 13px; background: repeating-linear-gradient(#555 0 1px, transparent 1px 3px); }
.sep { width: 1px; height: 12px; background: #bbb; }
.dd { width: 3px; height: 2px; flex: none; background: #333; clip-path: polygon(0 0, 100% 0, 50% 100%); }
.dd.off { background: #bbb; }
.pager { margin-left: auto; margin-right: 14px; display: flex; align-items: center; gap: 1px; }
.pager input { width: 21px; height: 11px; background: #fff; text-align: right; padding-right: 2px; margin-left: 2px; }

main { flex: 1; min-height: 0; display: flex; gap: 2px; padding-right: 1px; }
aside { width: 223px; flex: none; display: flex; flex-direction: column; padding-left: 1px; }
.tab { align-self: flex-start; height: 11px; padding: 1px 2px; background: #f6f6f6; border: 1px solid #aaa; border-bottom: 0; display: flex; gap: 4px; line-height: 9px; }
.browser { flex: 1; min-height: 0; display: flex; flex-direction: column; border: 1px solid #999; }
.views { display: flex; gap: 2px; height: 14px; align-items: center; padding-left: 1px; }
.views .on { background: #f2b47e; outline: 1px solid #d98b4a; }
.files { background: repeating-linear-gradient(#fff 0 8px, #f4f4f4 8px 9px); height: 57px; }
table { border-collapse: collapse; width: 100%; table-layout: fixed; }
th { height: 14px; padding: 0 1px; font-weight: normal; font-family: "Open Sans", sans-serif; font-size: 6px; text-align: left; background: linear-gradient(#fff, #e6e6e6); border-right: 1px solid #d5d5d5; border-bottom: 1px solid #bbb; }
th:nth-child(2), th:nth-child(3) { width: 12px; } th:nth-child(4) { width: 13px; }
th.cf { width: 28px; background: linear-gradient(#f2f9fd, #cfe4f0); } th.rest { border-right: 0; width: auto; }
td { height: 10px; padding: 0 2px; }
.fi { display: flex; align-items: center; justify-content: flex-end; gap: 5px; padding-right: 2px; }
.split { height: 5px; flex: none; background: #f0f0f0; border-top: 1px solid #ccc; text-align: center; font-size: 4px; line-height: 4px; display: flex; }
.split span { flex: 1; }
.split::after { content: ""; width: 6px; height: 3px; margin-right: 6px; background: #333; clip-path: polygon(0 0, 100% 0, 50% 100%); }
.step { height: 15px; flex: none; display: flex; margin-bottom: 3px; }
.spin { width: 8px; display: flex; flex-direction: column; }
.spin button { flex: 1; background: #f0f0f0; border: 1px solid #ccc; display: grid; place-items: center; }
.spin button::after { content: ""; width: 3px; height: 2px; background: #222; clip-path: polygon(0 0, 100% 0, 50% 100%); }
.spin button:first-child::after { clip-path: polygon(50% 0, 100% 100%, 0 100%); }
.sel { display: flex; flex: 1; min-width: 0; align-items: center; background: #fff; }
.sel select { appearance: none; flex: 1; width: 100%; height: 100%; padding-left: 2px; opacity: 1; }
.sel::after { content: ""; flex: none; width: 5px; height: 3px; margin: 0 2px; background: #222; clip-path: polygon(0 0, 100% 0, 50% 100%); }
.step .sel { align-self: flex-start; height: 12px; border-bottom: 1px solid #ddd; }
.sel.box { flex: none; height: 14px; border: 1px solid #ccc; border-top: 2px solid #777; border-left: 2px solid #777; }
.sel.off { background: #f0f0f0; }
.sel.off::after { background: #999; }
.off, .off select, .btn:disabled { color: #8c8c8c; }
.eyes { height: 15px; flex: none; display: flex; align-items: center; gap: 2px; }
.eyes svg { padding-bottom: 1px; }
.modes { margin-left: auto; width: 85px; display: flex; align-items: center; justify-content: space-between; padding-right: 2px; }
.ehead, .nhead { height: 11px; flex: none; display: flex; align-items: center; gap: 2px; font: 6px/8px "Open Sans", sans-serif; background: linear-gradient(#fff, #e4e4e4); border: 1px solid #c8c8c8; border-width: 1px 0; }
.ehead .ent { width: 87px; padding-left: 1px; align-self: stretch; background: linear-gradient(#f0f8fc, #cbe1ee); }
.ehead .id { margin-left: 3px; } .ehead .ic:last-child { margin-left: 3px; }
.nhead { padding-left: 1px; }
.treebox { flex: 1; min-height: 0; background: repeating-linear-gradient(#fff 0 8px, #f5f5f5 8px 9px); }
.tree { height: 85px; display: grid; grid-auto-rows: 1fr; }
.tree li { display: flex; align-items: center; gap: 3px; padding-left: 2px; line-height: 8px; }
.tree .ex { width: 6px; height: 6px; } .tree .in { padding-left: 2px; }
.props { height: 123px; flex: none; background: repeating-linear-gradient(#fff 0 8px, #f5f5f5 8px 9px); }

.work { flex: 1; min-width: 0; display: flex; flex-direction: column; border-left: 1px solid #777; border-right: 1px solid #999; border-bottom: 1px solid #aaa; }
h2 { height: 11px; line-height: 11px; font-size: 8px; font-weight: bold; text-align: center; color: #000; }
.stage { flex: 1; min-height: 0; display: flex; padding-right: 2px; }
.side { width: 23px; flex: none; padding-top: 2px; display: flex; flex-direction: column; align-items: center; }
.hgrip { width: 13px; height: 1px; background: repeating-linear-gradient(90deg, #333 0 1px, transparent 1px 4px); }
.s1, .s2 { display: flex; flex-direction: column; justify-content: space-between; padding: 3px 0 4px; }
.s1 { height: 108px; } .s2 { height: 107px; }
.view { flex: 1; position: relative; display: flex; justify-content: space-between; border: 1px solid #35c3cc; background: linear-gradient(#2a5482 0, #4c6a8a 30%, #718293 60%, #8f9499 82%, #9e9e9e 100%); color: #dde4ea; padding: 2px 4px; }
.legend, .frame { line-height: 9px; position: relative; z-index: 1; }
.scale { display: flex; gap: 1px; }
.scale svg { width: 12px; height: 104px; }
.scale ol { height: 104px; display: grid; grid-auto-rows: 1fr; align-items: center; }
.none { color: #a4adb6; display: flex; align-items: center; gap: 7px; }
.none i { width: 6px; height: 5px; background: #b9bdc1; }
.frame { text-align: right; line-height: 10px; }
.plot { position: absolute; inset: 0; width: 100%; height: 100%; }
.triad { position: absolute; left: 0; bottom: 0; width: 70px; height: 50px; }
.triad text { font: 7px "Liberation Serif", serif; fill: #eee; }

.bottom { height: 20px; padding: 0 3px 3px; gap: 5px; border-bottom: 1px solid #c4c4c4; }
.h1 { width: 22px; } .h2 { width: 157px; } .h3 { width: 176px; } .h4 { width: 75px; } .h5 { width: 91px; }
.h2 .bare { flex: none; width: 40px; height: 12px; }
.sliders { width: 88px; display: flex; flex-direction: column; }
.sliders input { appearance: none; width: 100%; height: 5px; background: #c6c6c6; }
.sliders .low { border-top: 2px solid #c6c6c6; background: #e4e4e4; }
.sliders input::-webkit-slider-thumb { appearance: none; width: 16px; height: 4px; background: #f6f6f6; border-right: 1px solid #444; border-bottom: 1px solid #444; }
.sliders .low::-webkit-slider-thumb { width: 10px; height: 3px; }

.panel { height: 104px; flex: none; display: flex; gap: 4px; padding: 4px 2px 2px; }
.col { display: flex; flex-direction: column; flex: none; gap: 2px; }
.ind { margin-left: 4px; }
.lab { height: 10px; flex: none; display: flex; justify-content: space-between; }
.k1 { width: 120px; } .k1 .ind { margin-right: 13px; }
.k2 { width: 109px; } .k2 .ind { margin-left: 7px; margin-right: 1px; }
.k3 { width: 82px; margin-left: 1px; }
.k4 { width: 53px; }
.btn { background: #f0f0f0; border: 1px solid #fff; border-right-color: #666; border-bottom-color: #666; display: grid; place-items: center; }
.more { width: 11px; height: 10px; line-height: 5px; }
.layers { display: flex; align-items: center; gap: 4px; height: 16px; padding-left: 4px; }
.layers .sel { width: 46px; margin-left: 4px; } .layers .ic { width: 12px; height: 12px; }
.chk { display: flex; align-items: center; gap: 3px; height: 10px; white-space: nowrap; }
.chk input { appearance: none; flex: none; width: 7px; height: 7px; background: #fff; border: 1px solid #ccc; border-top-color: #666; border-left-color: #666; display: grid; place-items: center; }
.chk input:disabled { background: #f0f0f0; }
.chk input:checked::after { content: "✓"; font-size: 6px; line-height: 5px; font-weight: bold; }
.pick { display: flex; gap: 1px; height: 14px; padding-left: 4px; margin-right: 3px; }
.pick.ind { padding: 0; }
.drop, .sq { width: 13px; flex: none; }
.drop::after { content: ""; width: 5px; height: 3px; background: #222; clip-path: polygon(0 0, 100% 0, 50% 100%); }
.sq svg { width: 9px; height: 9px; }
.yellow { flex: 1; background: #e6e25c; } .yellow:disabled { color: #a8a350; }
.lit { border: 2px solid #48dc90; border-bottom-color: #2e9c8c; }
.field { height: 13px; background: #f0f0f0; border: 1px solid #ddd; border-top: 1px solid #555; border-left: 2px solid #777; }
.var { display: flex; align-items: center; gap: 4px; height: 14px; padding-left: 4px; }
.var .field { width: 18px; text-align: right; padding-right: 2px; }
.avg { height: 15px; margin: 0 0 1px 8px; }
.k4 .field { width: 34px; margin-left: 1px; } .k4 .short { width: 38px; margin-left: 1px; }
.acts { margin: auto 0 2px; display: flex; flex-direction: column; } .acts .btn { height: 15px; }
.k5 { width: 90px; padding-left: 2px; border-left: 1px solid #999; box-shadow: inset 1px 0 #fff; display: flex; flex-direction: column; }
.tabs { display: flex; height: 13px; align-items: flex-end; }
.tabs button { height: 11px; padding: 0 2px; border: 1px solid #999; border-bottom: 0; }
.tabs .cur { height: 13px; padding: 0 3px; background: #f6f6f6; }
.page { flex: 1; min-height: 0; border: 1px solid #999; padding: 0 9px 8px 4px; display: flex; flex-direction: column; justify-content: space-between; }
.page .btn { height: 12px; } .page .chk { flex: none; }
footer { height: 16px; flex: none; line-height: 15px; padding-left: 2px; }
```
